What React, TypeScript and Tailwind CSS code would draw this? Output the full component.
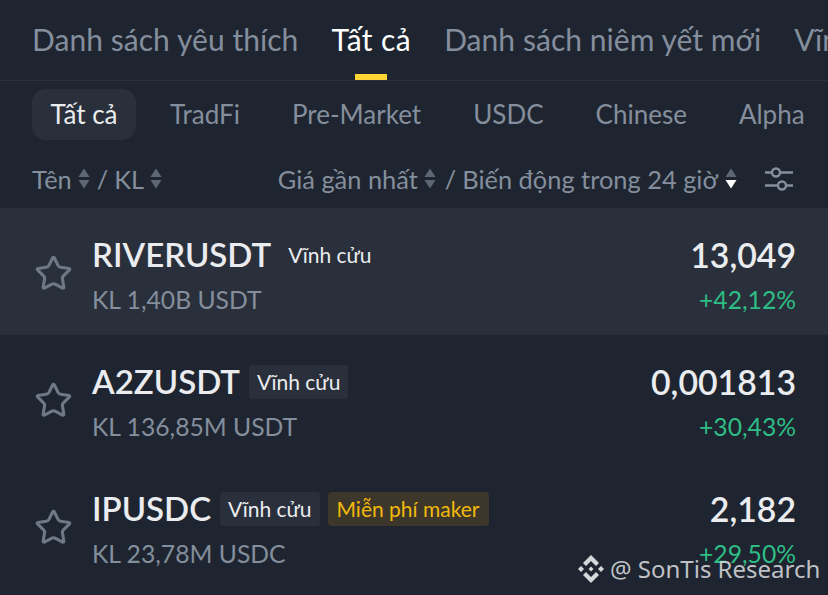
import { Star } from "lucide-react";

const topTabs = ["Danh sách yêu thích", "Tất cả", "Danh sách niêm yết mới", "Vĩnh cửu"];
const subTabs = ["Tất cả", "TradFi", "Pre-Market", "USDC", "Chinese", "Alpha"];

const rows = [
  { name: "RIVERUSDT", volume: "KL 1,40B USDT", price: "13,049", change: "+42,12%", active: true, maker: false },
  { name: "A2ZUSDT", volume: "KL 136,85M USDT", price: "0,001813", change: "+30,43%", active: false, maker: false },
  { name: "IPUSDC", volume: "KL 23,78M USDC", price: "2,182", change: "+29,50%", active: false, maker: true },
];

function SortIcon({ down = false }: { down?: boolean }) {
  return (
    <svg width="12" height="21" viewBox="0 0 12 21" className="shrink-0">
      <path d="M6 0.5 L11.5 9 H0.5 Z" fill="#5e6673" />
      <path d="M6 20.5 L11.5 12 H0.5 Z" fill={down ? "#ffffff" : "#5e6673"} />
    </svg>
  );
}

function FilterIcon() {
  return (
    <svg width="28" height="24" viewBox="0 0 28 24" fill="none" stroke="#848e9c" strokeWidth="2.4" className="shrink-0">
      <path d="M0 5.5 H7 M15 5.5 H28 M0 18.5 H13 M21 18.5 H28" />
      <circle cx="11" cy="5.5" r="4" />
      <circle cx="17" cy="18.5" r="4" />
    </svg>
  );
}

function BinanceMark() {
  return (
    <svg width="28" height="28" viewBox="0 0 28 28" fill="#d5d7da" className="shrink-0">
      <path d="M14 0 L22 8 L19 11 L14 6 L9 11 L6 8 Z" />
      <path d="M14 28 L22 20 L19 17 L14 22 L9 17 L6 20 Z" />
      <path d="M4 11 L7 14 L4 17 L1 14 Z" />
      <path d="M24 11 L27 14 L24 17 L21 14 Z" />
      <path d="M14 11.5 L16.5 14 L14 16.5 L11.5 14 Z" />
    </svg>
  );
}

export default function App() {
  return (
    <div className="relative h-[595px] w-[828px] overflow-hidden bg-[#1e2530] font-['Lato','Liberation_Sans',sans-serif]">
      <div className="flex h-[81px] gap-[33px] overflow-hidden whitespace-nowrap border-b border-[#2b3139] pl-8">
        {topTabs.map((tab) => (
          <div
            key={tab}
            className={`relative flex h-full shrink-0 items-center pb-[1px] text-[30px] ${tab === "Tất cả" ? "tracking-[0.4px] text-white" : "tracking-[0.05px] text-[#848e9c]"}`}
          >
            {tab}
            {tab === "Tất cả" ? (
              <span className="absolute bottom-0 left-1/2 h-[6px] w-8 -translate-x-1/2 bg-[#fcd535]" />
            ) : null}
          </div>
        ))}
      </div>

      <div className="mt-2 flex h-[51px] items-center gap-4 overflow-hidden whitespace-nowrap pl-8">
        {subTabs.map((tab, i) => (
          <div
            key={tab}
            className={`flex h-full shrink-0 items-center rounded-[14px] text-[26px] ${i === 0 ? "w-[104px] justify-center bg-[#2a303b] text-[#eaecef]" : "px-[18px] text-[#848e9c]"}`}
          >
            {tab}
          </div>
        ))}
      </div>

      <div className="flex h-[68px] items-center justify-between pl-8 pr-[35px] pt-[10px] text-[25.4px] text-[#848e9c]">
        <div className="flex items-center gap-[6px]">
          <span>Tên</span>
          <SortIcon />
          <span className="ml-[1px]">/</span>
          <span>KL</span>
          <SortIcon />
        </div>
        <div className="flex items-center">
          <div className="flex items-center gap-[6px]">
            <span>Giá gần nhất</span>
            <SortIcon />
            <span className="ml-[3px]">/</span>
            <span className="mr-[1px]">Biến động trong 24 giờ</span>
            <SortIcon down />
          </div>
          <div className="ml-[28px]">
            <FilterIcon />
          </div>
        </div>
      </div>

      {rows.map((row) => (
        <div
          key={row.name}
          className={`flex h-[127px] items-center pl-[34px] pr-8 pt-[7px] ${row.active ? "bg-[#2a303b]" : ""}`}
        >
          <Star size={39} strokeWidth={1.9} className="mb-1 shrink-0 text-[#6f7885]" />
          <div className="ml-[19px] flex-1">
            <div className="flex h-[38px] items-center gap-2">
              <span className="text-[33px] font-semibold text-[#eaecef]">{row.name}</span>
              <span className="ml-[1px] flex h-[34px] items-center rounded-[4px] bg-[#2a303b] px-2 text-[21px] text-[#eaecef]">
                Vĩnh cửu
              </span>
              {row.maker ? (
                <span className="flex h-[34px] items-center rounded-[4px] bg-[#3c372a] px-[9px] text-[21px] text-[#f0b90b]">
                  Miễn phí maker
                </span>
              ) : null}
            </div>
            <div className="mt-[11px] text-[24.7px] leading-[30px] text-[#848e9c]">{row.volume}</div>
          </div>
          <div className="text-right">
            <div className="h-[38px] text-[33.8px] font-semibold leading-[38px] text-[#eaecef]">{row.price}</div>
            <div className="mt-[11px] text-[24.7px] leading-[30px] text-[#2ebd85]">{row.change}</div>
          </div>
        </div>
      ))}

      {/* watermark */}
      <div className="absolute left-[577px] top-[555px] flex items-center gap-[5px] whitespace-nowrap font-['Noto_Sans',sans-serif] text-[24px] leading-[28px] text-[#d5d7da]/90">
        <BinanceMark />
        <span>@ SonTis Research</span>
      </div>
    </div>
  );
}
